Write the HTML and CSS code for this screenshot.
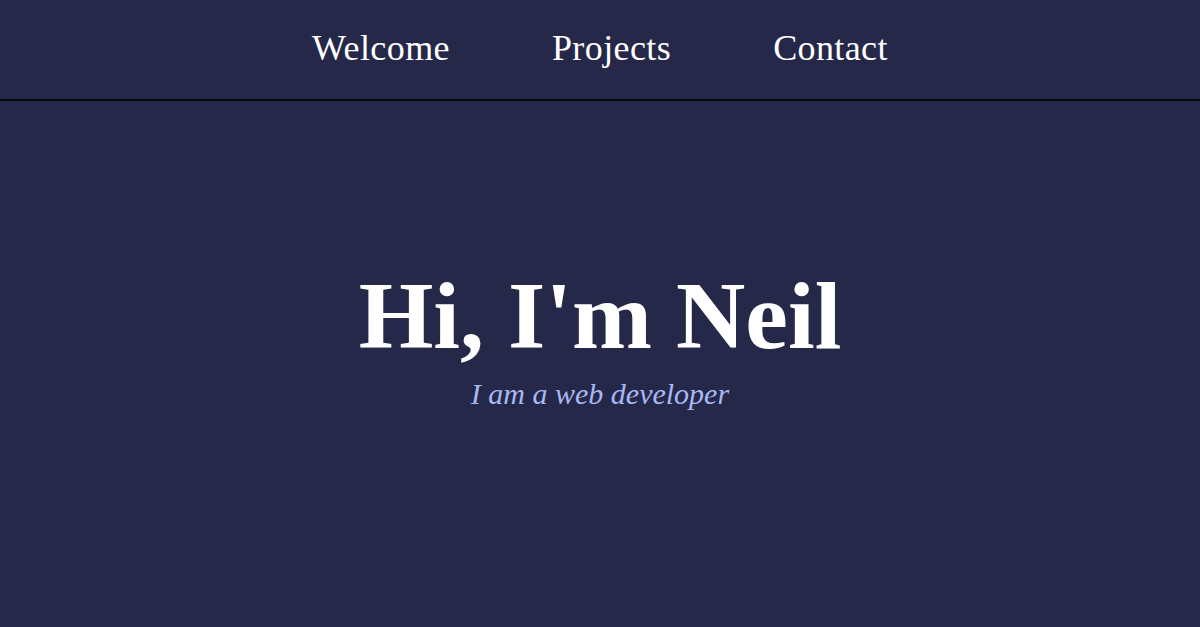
FILE: index.html
```html
<!DOCTYPE html>
<html>
<head>
<meta charset="utf-8">
<link rel="stylesheet" href="styles.css">
</head>
<body>
<nav class="nav">
  <a class="nav-link" href="#welcome">Welcome</a>
  <a class="nav-link" href="#projects">Projects</a>
  <a class="nav-link" href="#contact">Contact</a>
</nav>
<section class="welcome" id="welcome">
  <h1 class="title">Hi, I'm Neil</h1>
  <p class="subtitle">I am a web developer</p>
</section>
</body>
</html>
```
FILE: styles.css
```css
html, body {
  margin: 0;
  padding: 0;
  background: #252849;
  font-family: "Liberation Serif", "Times New Roman", serif;
  height: 100%;
}
.nav {
  display: flex;
  justify-content: center;
  gap: 102px;
  padding: 28px 0 30px;
  border-bottom: 2px solid #08080f;
}
.nav-link {
  color: #ffffff;
  text-decoration: none;
  font-size: 36px;
  line-height: 41px;
  letter-spacing: 0.4px;
}
.welcome {
  display: flex;
  flex-direction: column;
  align-items: center;
  padding-top: 160px;
}
.title {
  margin: 0;
  color: #ffffff;
  font-size: 96px;
  font-weight: bold;
  line-height: 110px;
}
.subtitle {
  margin: 6px 0 0;
  color: #a9b8f2;
  font-size: 30px;
  font-style: italic;
  line-height: 34px;
}
```
